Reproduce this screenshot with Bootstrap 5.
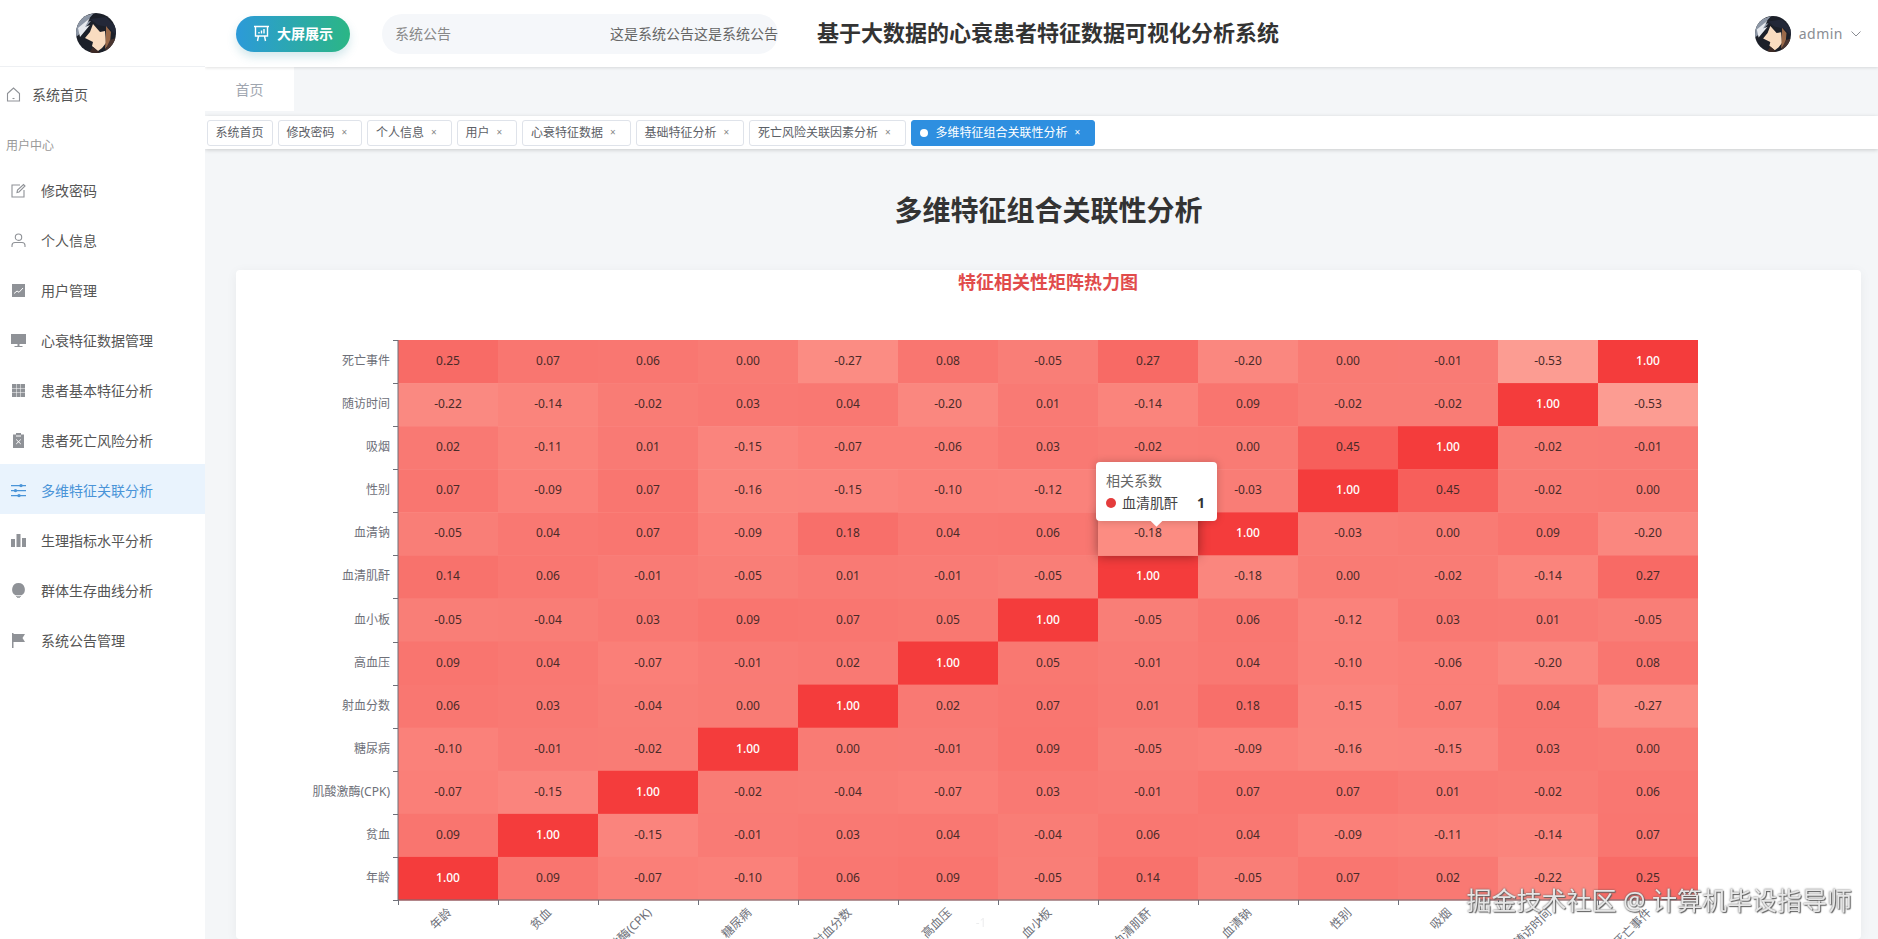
<!DOCTYPE html>
<html lang="zh-CN">
<head>
<meta charset="utf-8">
<title>基于大数据的心衰患者特征数据可视化分析系统</title>
<link href="https://cdn.jsdelivr.net/npm/bootstrap@5.3.0/dist/css/bootstrap.min.css" rel="stylesheet">
<style>
html,body{height:100%;overflow:hidden}
body{font-family:"Noto Sans","Noto Sans CJK SC",sans-serif;background:#f4f6f8;color:#606266;font-size:14px}
.app-side{width:205px;flex:0 0 205px;background:#fff;height:100vh;z-index:3}
.side-logo{height:67px;border-bottom:1px solid #eef0f3;padding-right:14px}
.ava-lg{width:40px;height:40px;display:block}
.ava-sm{width:36px;height:36px;display:block}
.side-home{height:54px;padding-left:6px;gap:11px;color:#555}
.side-group{height:43px;padding-left:6px;font-size:12px;color:#999;padding-top:7px}
.side-item{height:50px;padding:3px 0 0 11px;gap:15px;color:#555}
.side-item.is-on{background:#e9f3fd;color:#4a94d8}
.side-ico{width:15px;height:15px;flex:0 0 15px;fill:#8f9297}
.line-ico{fill:none;stroke:#8f9297;stroke-width:1.1}
.is-on .side-ico{fill:#4a94d8}
.top-head{height:67px;background:#fff;box-shadow:0 1px 3px rgba(0,0,0,.12);z-index:2}
.screen-btn{width:114px;height:36px;margin-left:31px;border-radius:18px;border:0;color:#fff;font-weight:700;font-size:14px;gap:7px;background:linear-gradient(90deg,#2c9ad9,#2bb685);box-shadow:0 5px 10px rgba(60,150,170,.22);padding:0}
.notice-bar{width:396px;height:40px;margin-left:32px;border-radius:20px;background:#f5f7fa;padding-left:13px;color:#888;overflow:hidden}
.notice-roll{margin-left:159px;white-space:nowrap;color:#666;overflow:hidden;flex:1 1 0;min-width:0}
.sys-title{margin:0 0 2px 39px;font-size:22px;font-weight:700;color:#333;white-space:nowrap}
.user-box{margin-right:17px;gap:8px;color:#8a8d93;letter-spacing:.5px}
.crumb-row{height:49px;padding-bottom:5px}
.crumb-tab{width:89px;height:44px;background:#fff;color:#a0a6b0}
.tag-bar{height:33px;background:#fff;box-shadow:0 1px 4px rgba(0,0,0,.18);padding-left:1.5px;gap:5px;z-index:1}
.view-tag{height:26px;padding:0 8px;border:1px solid #dfe3ea;border-radius:3px;background:#fff;font-size:12px;color:#5c6066;white-space:nowrap}
.view-tag.has-x{padding-right:7px}
.tag-x{width:19.5px;text-align:center;font-size:10px;color:#888}
.view-tag.is-cur{background:#2e8fe0;border-color:#2e8fe0;color:#fff}
.view-tag.is-cur .tag-x{color:#fff}
.cur-dot{width:8px;height:8px;border-radius:50%;background:#fff;margin-right:8px}
.page-body{padding:0 17px 0 31px;min-height:0}
.page-title{height:121px;margin:0;padding-top:2px;font-size:28px;font-weight:700;color:#333}
.chart-card{border:0;border-radius:4px;box-shadow:0 2px 12px rgba(0,0,0,.05);min-height:0;overflow:hidden}
.heat-svg{width:1625px;height:669px;display:block}
.heat-svg text{font-family:"Noto Sans","Noto Sans CJK SC",sans-serif}
.hm-title{font-size:18px;font-weight:700;fill:#e14b4b}
.hm-val{font-size:12px;fill:#4a2a28}
.hm-one{fill:#fff;font-weight:500}
.hm-lab{font-size:12px;fill:#6e7079}
.hm-hover{filter:drop-shadow(0 0 6px rgba(0,0,0,.4))}
.hm-axis{stroke:#6e7079;stroke-width:1;fill:none}
.chart-tip{position:absolute;left:860px;top:192px;width:121px;height:59px;padding:8px 10px;background:#fff;border-radius:4px;box-shadow:0 0 8px rgba(0,0,0,.2);color:#666;line-height:22px;font-size:14px}
.chart-tip::after{content:"";position:absolute;left:56px;bottom:-4px;width:9px;height:9px;background:#fff;transform:rotate(45deg)}
.tip-dot{width:10px;height:10px;border-radius:50%;background:#e43c3c;margin-right:6px}
.tip-num{font-weight:700;color:#333;margin-left:auto;margin-right:2px}
.tip-name{color:#444}
.water-mark{position:fixed;right:26px;top:883px;font-size:25px;line-height:34px;color:#e6e6e6;text-shadow:0 0 2px #555,1px 1px 1px #666;white-space:nowrap;z-index:5}
</style>
</head>
<body>
<svg width="0" height="0" class="position-absolute">
  <defs>
    <clipPath id="avaClip"><circle cx="20" cy="20" r="20"/></clipPath>
    <symbol id="avaPic" viewBox="0 0 40 40">
      <g clip-path="url(#avaClip)">
        <rect width="40" height="40" fill="#1c2029"/>
        <path d="M0 6 L18 0 L10 9 L15 8 L5 20 L0 24Z" fill="#8d97a6"/>
        <path d="M2 15 L14 5 L9 14 L14 12 L4 24Z" fill="#e6e9ee"/>
        <path d="M14 6 L30 4 L40 14 V22 L32 14 L22 12Z" fill="#232838"/>
        <path d="M17 11 L24 19 L29 18 L30 30 L26 35 L22 38 L16 33 L17 29 L9 25 L14 19Z" fill="#f9dcc0"/>
        <path d="M30 13 L35 19 L34 30 L29 36 L30 22Z" fill="#9a6a4a"/>
        <path d="M17 34 L24 40 L13 40Z" fill="#3d2a25"/>
        <path d="M34 27 L40 25 V40 H28Z" fill="#4a3530"/>
      </g>
    </symbol>
  </defs>
</svg>

<div class="d-flex">
  <aside class="app-side d-flex flex-column flex-shrink-0">
    <div class="side-logo d-flex align-items-center justify-content-center">
      <svg class="ava-lg"><use href="#avaPic"/></svg>
    </div>
    <div class="side-home d-flex align-items-center">
      <svg class="side-ico line-ico" viewBox="0 0 15 15"><path d="M1.5 6.5 7.5 1l6 5.5V14h-12Z"/><path d="M6.5 11.5h2"/></svg>
      <span>系统首页</span>
    </div>
    <div class="side-group d-flex align-items-center">用户中心</div>
    <div class="side-item d-flex align-items-center">
      <svg class="side-ico line-ico" viewBox="0 0 15 15"><path d="M9 2H1v12h12V7"/><path d="M6 9.5 6.5 7l6-5.5 1.5 1.5L8 9Z"/></svg>
      <span>修改密码</span>
    </div>
    <div class="side-item d-flex align-items-center">
      <svg class="side-ico line-ico" viewBox="0 0 15 15"><circle cx="7.5" cy="4.2" r="3.2"/><path d="M1 14v-1.5c0-2 1.5-3 3-3h7c1.5 0 3 1 3 3V14"/></svg>
      <span>个人信息</span>
    </div>
    <div class="side-item d-flex align-items-center">
      <svg class="side-ico" viewBox="0 0 15 15"><path d="M1 1h13v13H1Z"/><path d="M3 10.5 6 8l2 1.3L12 5" fill="none" stroke="#fff"/></svg>
      <span>用户管理</span>
    </div>
    <div class="side-item d-flex align-items-center">
      <svg class="side-ico" viewBox="0 0 15 15"><path d="M0 1h15v10H0ZM6.5 11h2v2h-2ZM3.5 13h8v1h-8Z"/></svg>
      <span>心衰特征数据管理</span>
    </div>
    <div class="side-item d-flex align-items-center">
      <svg class="side-ico" viewBox="0 0 15 15"><path d="M1 1h4v4H1ZM5.5 1h4v4h-4ZM10 1h4v4h-4ZM1 5.5h4v4H1ZM5.5 5.5h4v4h-4ZM10 5.5h4v4h-4ZM1 10h4v4H1ZM5.5 10h4v4h-4ZM10 10h4v4h-4Z"/></svg>
      <span>患者基本特征分析</span>
    </div>
    <div class="side-item d-flex align-items-center">
      <svg class="side-ico" viewBox="0 0 15 15"><path d="M5 0h5v1.5h3V15H2V1.5h3Z"/><path d="M5.2 6.5 9.8 11M9.8 6.5 5.2 11M5 3h5" fill="none" stroke="#fff"/></svg>
      <span>患者死亡风险分析</span>
    </div>
    <div class="side-item is-on d-flex align-items-center">
      <svg class="side-ico" viewBox="0 0 15 15"><path d="M0 2h15v1.2H0ZM0 7h15v1.2H0ZM0 12h15v1.2H0Z"/><circle cx="10" cy="2.6" r="1.7"/><circle cx="4.5" cy="7.6" r="1.7"/><circle cx="8" cy="12.6" r="1.7"/></svg>
      <span>多维特征关联分析</span>
    </div>
    <div class="side-item d-flex align-items-center">
      <svg class="side-ico" viewBox="0 0 15 15"><path d="M0 6h4v8H0ZM5.5 1h4v13h-4ZM11 5h4v9h-4Z"/></svg>
      <span>生理指标水平分析</span>
    </div>
    <div class="side-item d-flex align-items-center">
      <svg class="side-ico" viewBox="0 0 15 15"><path d="M7.5 0a6.5 6.5 0 0 1 3 12.2H4.5A6.5 6.5 0 0 1 7.5 0ZM5 13h5v.8H5ZM6 14.3h3v.7H6Z"/></svg>
      <span>群体生存曲线分析</span>
    </div>
    <div class="side-item d-flex align-items-center">
      <svg class="side-ico" viewBox="0 0 15 15"><path d="M1 0h1.5v15H1ZM2.5 1H14l-2.5 4L14 9H2.5Z"/></svg>
      <span>系统公告管理</span>
    </div>
  </aside>

  <div class="d-flex flex-column flex-grow-1 vh-100 overflow-hidden">
    <header class="top-head d-flex align-items-center flex-shrink-0">
      <button type="button" class="btn screen-btn d-flex align-items-center justify-content-center">
        <svg width="17" height="17" viewBox="0 0 17 17" fill="none" stroke="#fff" stroke-width="1.4"><path d="M1 1.5h15M2.5 1.5v9.5h12V1.5M5.5 11l-1 5M11.5 11l1 5M6 8.5V7M8.5 8.5V5.5M11 8.5V4"/></svg>
        <span>大屏展示</span>
      </button>
      <div class="notice-bar d-flex align-items-center">
        <span>系统公告</span>
        <div class="notice-roll">这是系统公告这是系统公告这是系统公告</div>
      </div>
      <h1 class="sys-title">基于大数据的心衰患者特征数据可视化分析系统</h1>
      <div class="user-box d-flex align-items-center ms-auto">
        <svg class="ava-sm"><use href="#avaPic"/></svg>
        <span>admin</span>
        <svg width="10" height="6" viewBox="0 0 10 6" fill="none" stroke="#8a8d93"><path d="M.5.5 5 5 9.5.5"/></svg>
      </div>
    </header>

    <div class="crumb-row flex-shrink-0">
      <div class="crumb-tab d-flex align-items-center justify-content-center">首页</div>
    </div>

    <div class="tag-bar d-flex align-items-center flex-shrink-0">
      <div class="view-tag d-flex align-items-center">系统首页</div>
      <div class="view-tag has-x d-flex align-items-center">修改密码<span class="tag-x">×</span></div>
      <div class="view-tag has-x d-flex align-items-center">个人信息<span class="tag-x">×</span></div>
      <div class="view-tag has-x d-flex align-items-center">用户<span class="tag-x">×</span></div>
      <div class="view-tag has-x d-flex align-items-center">心衰特征数据<span class="tag-x">×</span></div>
      <div class="view-tag has-x d-flex align-items-center">基础特征分析<span class="tag-x">×</span></div>
      <div class="view-tag has-x d-flex align-items-center">死亡风险关联因素分析<span class="tag-x">×</span></div>
      <div class="view-tag has-x is-cur d-flex align-items-center"><span class="cur-dot"></span>多维特征组合关联性分析<span class="tag-x">×</span></div>
    </div>

    <main class="page-body d-flex flex-column flex-grow-1">
      <h2 class="page-title d-flex align-items-center justify-content-center flex-shrink-0">多维特征组合关联性分析</h2>
      <div class="card chart-card flex-grow-1 position-relative">
        <svg class="heat-svg" id="heat" viewBox="0 0 1625 669" xmlns="http://www.w3.org/2000/svg"></svg>
        <div class="chart-tip">
          <div>相关系数</div>
          <div class="d-flex align-items-center"><span class="tip-dot"></span><span class="tip-name">血清肌酐</span><span class="tip-num">1</span></div>
        </div>
      </div>
    </main>
  </div>
</div>

<div class="water-mark">掘金技术社区 @ 计算机毕设指导师</div>

<script>
var yLabs=["死亡事件","随访时间","吸烟","性别","血清钠","血清肌酐","血小板","高血压","射血分数","糖尿病","肌酸激酶(CPK)","贫血","年龄"];
var xLabs=yLabs.slice().reverse();
var M=[
[0.25,0.07,0.06,0.00,-0.27,0.08,-0.05,0.27,-0.20,0.00,-0.01,-0.53,1.00],
[-0.22,-0.14,-0.02,0.03,0.04,-0.20,0.01,-0.14,0.09,-0.02,-0.02,1.00,-0.53],
[0.02,-0.11,0.01,-0.15,-0.07,-0.06,0.03,-0.02,0.00,0.45,1.00,-0.02,-0.01],
[0.07,-0.09,0.07,-0.16,-0.15,-0.10,-0.12,0.00,-0.03,1.00,0.45,-0.02,0.00],
[-0.05,0.04,0.07,-0.09,0.18,0.04,0.06,-0.18,1.00,-0.03,0.00,0.09,-0.20],
[0.14,0.06,-0.01,-0.05,0.01,-0.01,-0.05,1.00,-0.18,0.00,-0.02,-0.14,0.27],
[-0.05,-0.04,0.03,0.09,0.07,0.05,1.00,-0.05,0.06,-0.12,0.03,0.01,-0.05],
[0.09,0.04,-0.07,-0.01,0.02,1.00,0.05,-0.01,0.04,-0.10,-0.06,-0.20,0.08],
[0.06,0.03,-0.04,0.00,1.00,0.02,0.07,0.01,0.18,-0.15,-0.07,0.04,-0.27],
[-0.10,-0.01,-0.02,1.00,0.00,-0.01,0.09,-0.05,-0.09,-0.16,-0.15,0.03,0.00],
[-0.07,-0.15,1.00,-0.02,-0.04,-0.07,0.03,-0.01,0.07,0.07,0.01,-0.02,0.06],
[0.09,1.00,-0.15,-0.01,0.03,0.04,-0.04,0.06,0.04,-0.09,-0.11,-0.14,0.07],
[1.00,0.09,-0.07,-0.10,0.06,0.09,-0.05,0.14,-0.05,0.07,0.02,-0.22,0.25]];
var X0=162,Y0=70,CW=100,CH=560/13,lo=[252,156,146],hi=[244,60,60];
function col(v){var t=(v+0.53)/1.53;return "rgb("+lo.map(function(a,i){return Math.round(a+(hi[i]-a)*t)}).join(",")+")";}
var s='<text class="hm-title" x="812" y="12" text-anchor="middle" dominant-baseline="central">特征相关性矩阵热力图</text>';
var txt='',hov='';
M.forEach(function(r,i){r.forEach(function(v,j){
  var x=X0+j*CW,y=Y0+i*CH,w=CW,h=CH;
  var rect='<rect x="'+x+'" y="'+y.toFixed(2)+'" width="'+w+'" height="'+(h+.5).toFixed(2)+'" fill="';
  if(i==4&&j==7){hov=rect+'rgb(252,140,130)" class="hm-hover"/>';}else{s+=rect+col(v)+'"/>';}
  if(!(i==3&&j==7))txt+='<text class="hm-val'+(v==1?' hm-one':'')+'" x="'+(x+50)+'" y="'+(y+CH/2-1).toFixed(2)+'" text-anchor="middle" dominant-baseline="central">'+v.toFixed(2)+'</text>';
});});
s+=hov+txt;
s+='<path class="hm-axis" d="M'+X0+' '+Y0+'V'+(Y0+560)+'H'+(X0+1300)+'"/>';
for(var i=0;i<=13;i++){
  var ty=Math.round(Y0+i*CH)+.5;s+='<path class="hm-axis" d="M'+(X0-5)+' '+ty+'H'+X0+'"/>';
  var tx=X0+i*CW+.5;s+='<path class="hm-axis" d="M'+tx+' '+(Y0+560)+'v5"/>';
}
yLabs.forEach(function(l,i){s+='<text class="hm-lab" x="'+(X0-8)+'" y="'+(Y0+(i+.5)*CH-1).toFixed(2)+'" text-anchor="end" dominant-baseline="central">'+l+'</text>';});
xLabs.forEach(function(l,j){var x=X0+(j+.5)*CW+1,y=Y0+570;s+='<text class="hm-lab" transform="translate('+x+' '+y+') rotate(-45)" text-anchor="end" dominant-baseline="central">'+l+'</text>';});
s+='<text class="hm-lab" x="803" y="657" text-anchor="middle">1</text><text class="hm-lab" x="745" y="657" text-anchor="middle" opacity=".12">-1</text>';
document.getElementById('heat').innerHTML=s;
</script>
<script src="https://cdn.jsdelivr.net/npm/bootstrap@5.3.0/dist/js/bootstrap.bundle.min.js"></script>
</body>
</html>
